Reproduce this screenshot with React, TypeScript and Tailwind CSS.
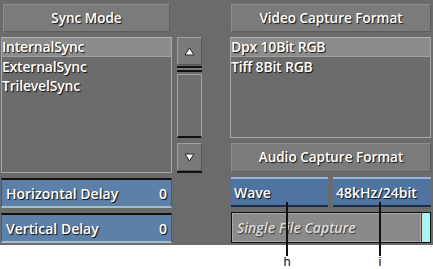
import React from 'react';

const shadow = '[text-shadow:1px_1px_1px_rgba(0,0,0,0.85)]';

const Header: React.FC<{ title: string; className?: string }> = ({ title, className = '' }) => (
    <div className={`flex items-center justify-center bg-[#7b7b7b] border border-[#8e8e8e] border-b-[#5e5e5e] border-r-[#5e5e5e] text-[13.5px] font-semibold text-white ${shadow} ${className}`}>
        {title}
    </div>
);

const ListBox: React.FC<{ items: string[]; className?: string }> = ({ items, className = '' }) => (
    <div className={`bg-[#6c6c6c] border border-[#a8a8a8] border-t-[#b4b4b4] ${className}`}>
        {items.map((item, i) => (
            <div
                key={item}
                className={`h-[19px] flex items-center leading-none text-[14px] font-semibold tracking-[-0.2px] text-white ${shadow} ${i === 0 ? 'bg-[#8c8c8c] border-b border-[#a0a0a0]' : ''}`}
            >
                {item}
            </div>
        ))}
    </div>
);

const DelayField: React.FC<{ label: string }> = ({ label }) => (
    <div className="h-[30px] flex items-center justify-between px-[4px] bg-[#5d80a9] border-t-2 border-t-[#111] border-b-2 border-b-[#a9bccd] border-x border-x-[#3f5c7e] text-[14px] font-semibold text-white [text-shadow:1px_1px_1px_rgba(0,0,0,0.9)]">
        <span>{label}</span>
        <span>0</span>
    </div>
);

const BlueButton: React.FC<{ label: string; className?: string }> = ({ label, className = '' }) => (
    <div className={`h-[30px] flex items-center px-[3px] bg-[#4f74a2] border-t-2 border-t-[#93b5df] border-b-2 border-b-[#1d2e48] text-[14px] font-semibold text-white [text-shadow:1px_1px_1px_rgba(0,0,0,0.9)] ${className}`}>
        {label}
    </div>
);

const ScrollButton: React.FC<{ up?: boolean }> = ({ up }) => (
    <div className="h-[28px] flex items-center justify-center bg-[#7a7a7a] border border-[#a0a0a0] border-b-[#555] border-r-[#555]">
        <svg width="11" height="9" viewBox="0 0 11 9">
            {up ? (
                <path d="M5.5 1 L10 8 L1 8 Z" fill="#fff" stroke="#222" strokeWidth="1" />
            ) : (
                <path d="M1 1 L10 1 L5.5 8 Z" fill="#fff" stroke="#222" strokeWidth="1" />
            )}
        </svg>
    </div>
);

const Callout: React.FC<{ x: number; label: string }> = ({ x, label }) => (
    <div className="absolute top-[202px] flex flex-col items-center" style={{ left: x - 6 }}>
        <div className="w-[2px] h-[54px] bg-[#111]" />
        <div className="w-[12px] h-[13px] text-center text-[13px] leading-[12px] text-[#111] font-['Liberation_Sans',sans-serif]">{label}</div>
    </div>
);

const App: React.FC = () => {
    return (
        <div className="relative w-[433px] h-[269px] bg-white overflow-hidden font-['Open_Sans',sans-serif]">
            <div className="h-[245px] bg-[#6b6b6b] flex pt-[4px]">
                {/* Left: sync mode */}
                <div className="w-[171px] ml-[1px] flex flex-col">
                    <Header title="Sync Mode" className="h-[28px] mx-[2px]" />
                    <ListBox items={['InternalSync', 'ExternalSync', 'TrilevelSync']} className="h-[136px] mt-[5px]" />
                    <div className="mt-[5px] flex flex-col gap-[5px]">
                        <DelayField label="Horizontal Delay" />
                        <DelayField label="Vertical Delay" />
                    </div>
                </div>

                {/* Scroller */}
                <div className="w-[25px] ml-[5px] mt-[33px] flex flex-col">
                    <ScrollButton up />
                    <div className="mt-[1px] h-[2px] bg-[#111]" />
                    <div className="h-[2px] bg-[#7a7a7a]" />
                    <div className="h-[2px] bg-[#111]" />
                    <div className="mt-[2px] h-[64px] bg-[#6e6e6e] border border-[#a4a4a4] border-b-2 border-b-[#111]" />
                    <div className="mt-[5px]">
                        <ScrollButton />
                    </div>
                    <div className="h-[2px] bg-[#111]" />
                </div>

                {/* Right: capture formats */}
                <div className="w-[201px] ml-[28px] flex flex-col">
                    <Header title="Video Capture Format" className="h-[28px] ml-[1px]" />
                    <ListBox items={['Dpx 10Bit RGB', 'Tiff 8Bit RGB']} className="h-[101px] mt-[5px]" />
                    <Header title="Audio Capture Format" className="h-[29px] mt-[5px] ml-[1px]" />
                    <div className="mt-[5px] flex gap-[5px] ml-[1px]">
                        <BlueButton label="Wave" className="w-[97px]" />
                        <BlueButton label="48kHz/24bit" className="flex-1" />
                    </div>
                    <div className="mt-[5px] ml-[1px] h-[31px] flex border border-[#111] bg-[#8a8a8a]">
                        <div className="flex-1 flex items-center px-[4px] border border-[#aaa] text-[14px] font-semibold italic text-[#dcdcdc] [text-shadow:1px_1px_1px_rgba(0,0,0,0.6)]">
                            Single File Capture
                        </div>
                        <div className="w-[1px] bg-[#6a3030]" />
                        <div className="w-[8px] bg-[#a8f4f4]" />
                    </div>
                </div>
            </div>

            <Callout x={287} label="h" />
            <Callout x={380} label="i" />
        </div>
    );
};

export default App;
